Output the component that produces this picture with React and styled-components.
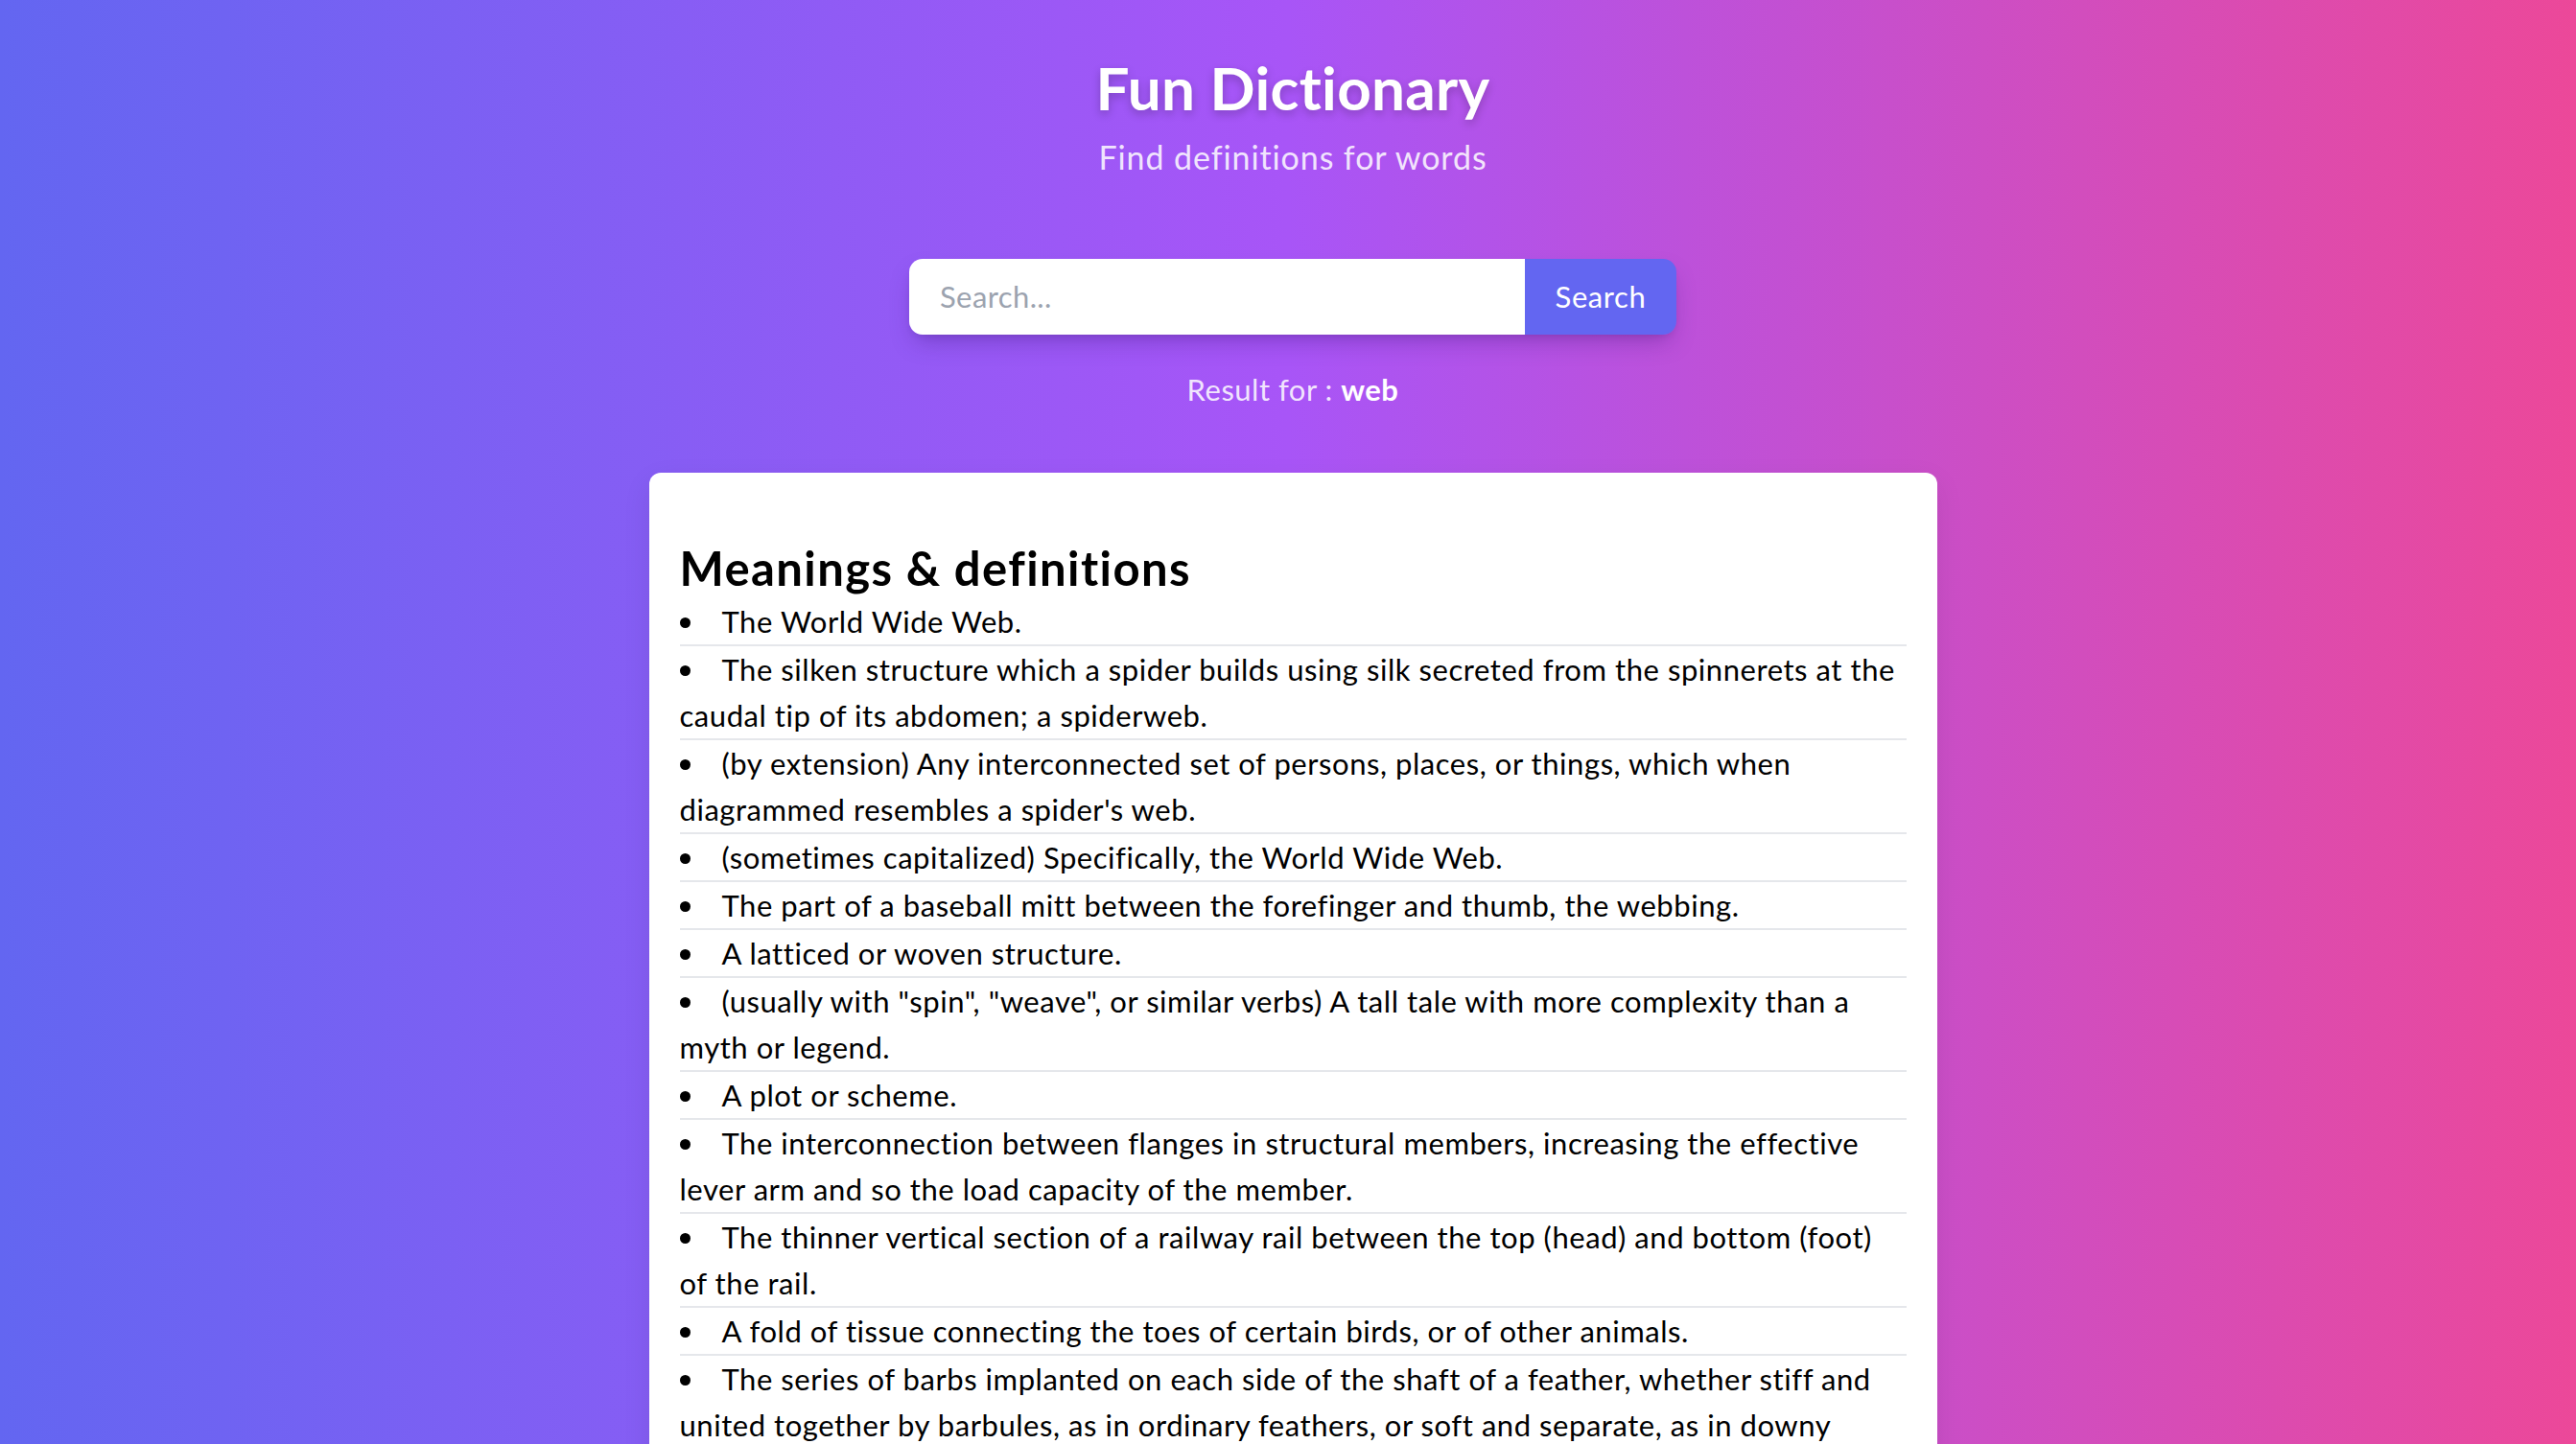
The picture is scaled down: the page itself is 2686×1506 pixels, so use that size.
import styled, { createGlobalStyle } from "styled-components";

const GlobalStyle = createGlobalStyle`
  html, body {
    margin: 0;
    padding: 0;
  }
  body {
    font-family: Lato, "Open Sans", sans-serif;
    background: #6366f1;
  }
  * {
    box-sizing: border-box;
  }
`;

// the reference sits a few pixels right of true centre
const Page = styled.div`
  min-height: 100vh;
  background: linear-gradient(to right, #6366f1, #a855f7, #ec4899);
  padding: 54px 15px 60px 25px;
  display: flex;
  flex-direction: column;
  align-items: center;
`;

const Title = styled.h1`
  margin: 0;
  font-size: 62px;
  line-height: 1.2;
  font-weight: 700;
  letter-spacing: 0.3px;
  color: #fff;
  text-shadow: 0 4px 10px rgba(0, 0, 0, 0.22);
`;

const Subtitle = styled.p`
  margin: 12px 0 0;
  font-size: 34px;
  line-height: 1.4;
  letter-spacing: 0.9px;
  color: rgba(255, 255, 255, 0.86);
`;

const SearchForm = styled.form`
  margin-top: 82px;
  display: flex;
  width: 800px;
  height: 79px;
  border-radius: 14px;
  overflow: hidden;
  box-shadow: 0 12px 24px -6px rgba(60, 20, 120, 0.35),
    0 4px 8px -4px rgba(0, 0, 0, 0.12);
`;

const SearchInput = styled.input`
  flex: 1;
  border: none;
  outline: none;
  padding: 0 32px;
  font-family: inherit;
  font-size: 31px;
  letter-spacing: 0.4px;
  color: #111;
  background: #fff;
  &::placeholder {
    color: #9ca3af;
  }
`;

const SearchButton = styled.button`
  width: 158px;
  border: none;
  background: #6366f1;
  color: #fff;
  font-family: inherit;
  font-size: 31px;
  letter-spacing: 0.6px;
  cursor: pointer;
`;

const ResultLine = styled.p`
  margin: 34px 0 0;
  font-size: 31px;
  line-height: 1.5;
  letter-spacing: 0.5px;
  color: rgba(255, 255, 255, 0.86);
  strong {
    color: #fff;
    font-weight: 700;
  }
`;

const Card = styled.section`
  margin-top: 64px;
  width: 1343px;
  background: #fff;
  border-radius: 12px;
  padding: 32px 32px 40px;
  box-shadow: 0 10px 30px rgba(0, 0, 0, 0.08);
`;

const CardHeading = styled.h2`
  margin: 38px 0 2px;
  font-size: 49px;
  line-height: 1.2;
  font-weight: 700;
  letter-spacing: 1.4px;
  color: #000;
`;

const DefinitionList = styled.ul`
  list-style: none;
  margin: 0;
  padding: 0;
`;

const DefinitionItem = styled.li`
  font-size: 31px;
  line-height: 48px;
  letter-spacing: 0.55px;
  color: #000;
  border-bottom: 2px solid #e5e7eb;
  &::before {
    content: "";
    display: inline-block;
    width: 11px;
    height: 11px;
    border-radius: 50%;
    background: #000;
    margin-right: 33px;
    vertical-align: 5px;
  }
`;

const definitions = [
  "The World Wide Web.",
  "The silken structure which a spider builds using silk secreted from the spinnerets at the caudal tip of its abdomen; a spiderweb.",
  "(by extension) Any interconnected set of persons, places, or things, which when diagrammed resembles a spider's web.",
  "(sometimes capitalized) Specifically, the World Wide Web.",
  "The part of a baseball mitt between the forefinger and thumb, the webbing.",
  "A latticed or woven structure.",
  '(usually with "spin", "weave", or similar verbs) A tall tale with more complexity than a myth or legend.',
  "A plot or scheme.",
  "The interconnection between flanges in structural members, increasing the effective lever arm and so the load capacity of the member.",
  "The thinner vertical section of a railway rail between the top (head) and bottom (foot) of the rail.",
  "A fold of tissue connecting the toes of certain birds, or of other animals.",
  "The series of barbs implanted on each side of the shaft of a feather, whether stiff and united together by barbules, as in ordinary feathers, or soft and separate, as in downy feathers.",
  "A thin metal sheet, plate, or strip, as of lead.",
  "The blade of a sword.",
  "The bit of a key.",
];

export default function App() {
  return (
    <>
      <GlobalStyle />
      <Page>
        <Title>Fun Dictionary</Title>
        <Subtitle>Find definitions for words</Subtitle>
        <SearchForm onSubmit={(e) => e.preventDefault()}>
          <SearchInput type="text" placeholder="Search..." />
          <SearchButton type="submit">Search</SearchButton>
        </SearchForm>
        <ResultLine>
          Result for : <strong>web</strong>
        </ResultLine>
        <Card>
          <CardHeading>Meanings &amp; definitions</CardHeading>
          <DefinitionList>
            {definitions.map((def, i) => (
              <DefinitionItem key={i}>{def}</DefinitionItem>
            ))}
          </DefinitionList>
        </Card>
      </Page>
    </>
  );
}
